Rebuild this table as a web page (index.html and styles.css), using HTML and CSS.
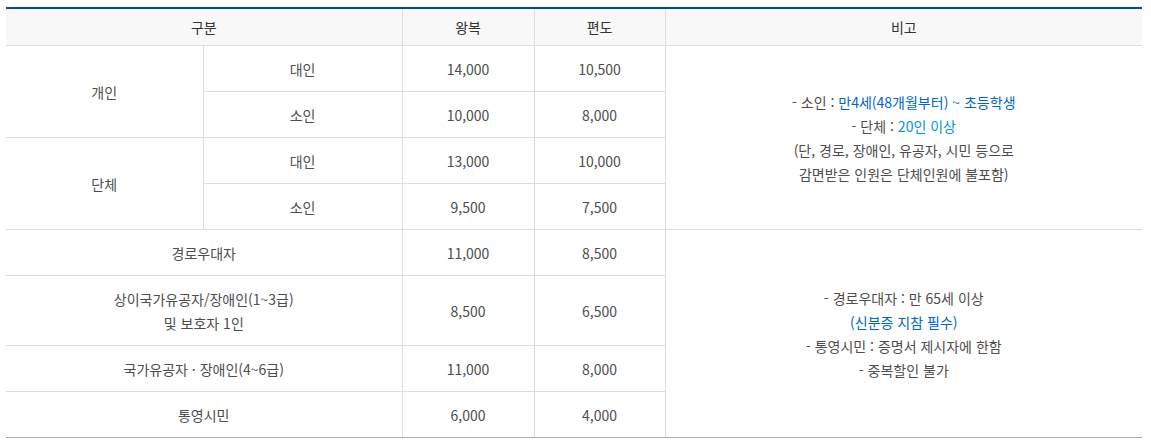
FILE: index.html
```html
<!DOCTYPE html>
<html lang="ko">
<head>
<meta charset="utf-8">
<link rel="stylesheet" href="styles.css">
</head>
<body>
<div class="wrap">
<table class="fare">
  <colgroup>
    <col class="c1"><col class="c2"><col class="c3"><col class="c4"><col class="c5">
  </colgroup>
  <thead>
    <tr><th colspan="2">구분</th><th>왕복</th><th>편도</th><th>비고</th></tr>
  </thead>
  <tbody>
    <tr><td rowspan="2">개인</td><td>대인</td><td>14,000</td><td>10,500</td>
      <td rowspan="4" class="note">- 소인 : <span class="blue">만4세(48개월부터) ~ 초등학생</span><br>- 단체 : <span class="cyan">20인 이상</span><br>(단, 경로, 장애인, 유공자, 시민 등으로<br>감면받은 인원은 단체인원에 불포함)</td></tr>
    <tr><td>소인</td><td>10,000</td><td>8,000</td></tr>
    <tr><td rowspan="2">단체</td><td>대인</td><td>13,000</td><td>10,000</td></tr>
    <tr><td>소인</td><td>9,500</td><td>7,500</td></tr>
    <tr><td colspan="2">경로우대자</td><td>11,000</td><td>8,500</td>
      <td rowspan="4" class="note">- 경로우대자 : 만 65세 이상<br><span class="blue">(신분증 지참 필수)</span><br>- 통영시민 : 증명서 제시자에 한함<br>- 중복할인 불가</td></tr>
    <tr class="tall"><td colspan="2">상이국가유공자/장애인(1~3급)<br>및 보호자 1인</td><td>8,500</td><td>6,500</td></tr>
    <tr><td colspan="2">국가유공자 · 장애인(4~6급)</td><td>11,000</td><td>8,000</td></tr>
    <tr class="last"><td colspan="2">통영시민</td><td>6,000</td><td>4,000</td></tr>
  </tbody>
</table>
</div>
</body>
</html>
```

FILE: styles.css
```css
html, body {
  margin: 0;
  padding: 0;
  background: #fff;
}
.wrap {
  padding: 7px 9px 0 6px;
}
.fare {
  width: 1136px;
  border-collapse: collapse;
  table-layout: fixed;
  border-top: 2px solid #004a8f;
  font-family: "Noto Sans CJK KR", "Noto Sans", sans-serif;
  font-size: 14px;
  color: #4d4d4d;
}
.c1 { width: 197px; }
.c2 { width: 199px; }
.c3 { width: 132px; }
.c4 { width: 131px; }
.c5 { width: 477px; }
.fare th, .fare td {
  border: 1px solid #ddd;
  text-align: center;
  vertical-align: middle;
  padding: 0;
  line-height: 24px;
}
.fare th:first-child, .fare td:first-child { border-left: none; }
.fare th:last-child { border-right: none; }
.fare td.note { border-right: none; }
.fare th {
  background: #f8f8f8;
  color: #333;
  font-weight: normal;
  height: 36px;
  border-top: none;
}
.fare tbody td { height: 45px; }
.fare tbody tr.tall td { height: 69px; }
.fare tbody tr.last td { border-bottom: 1px solid #aaa; }
.fare tbody td.note { border-bottom: 1px solid #aaa; }
.fare tbody tr:first-child td.note { border-bottom: 1px solid #ddd; }
.blue { color: #0066cc; }
.cyan { color: #0095cf; }
```
